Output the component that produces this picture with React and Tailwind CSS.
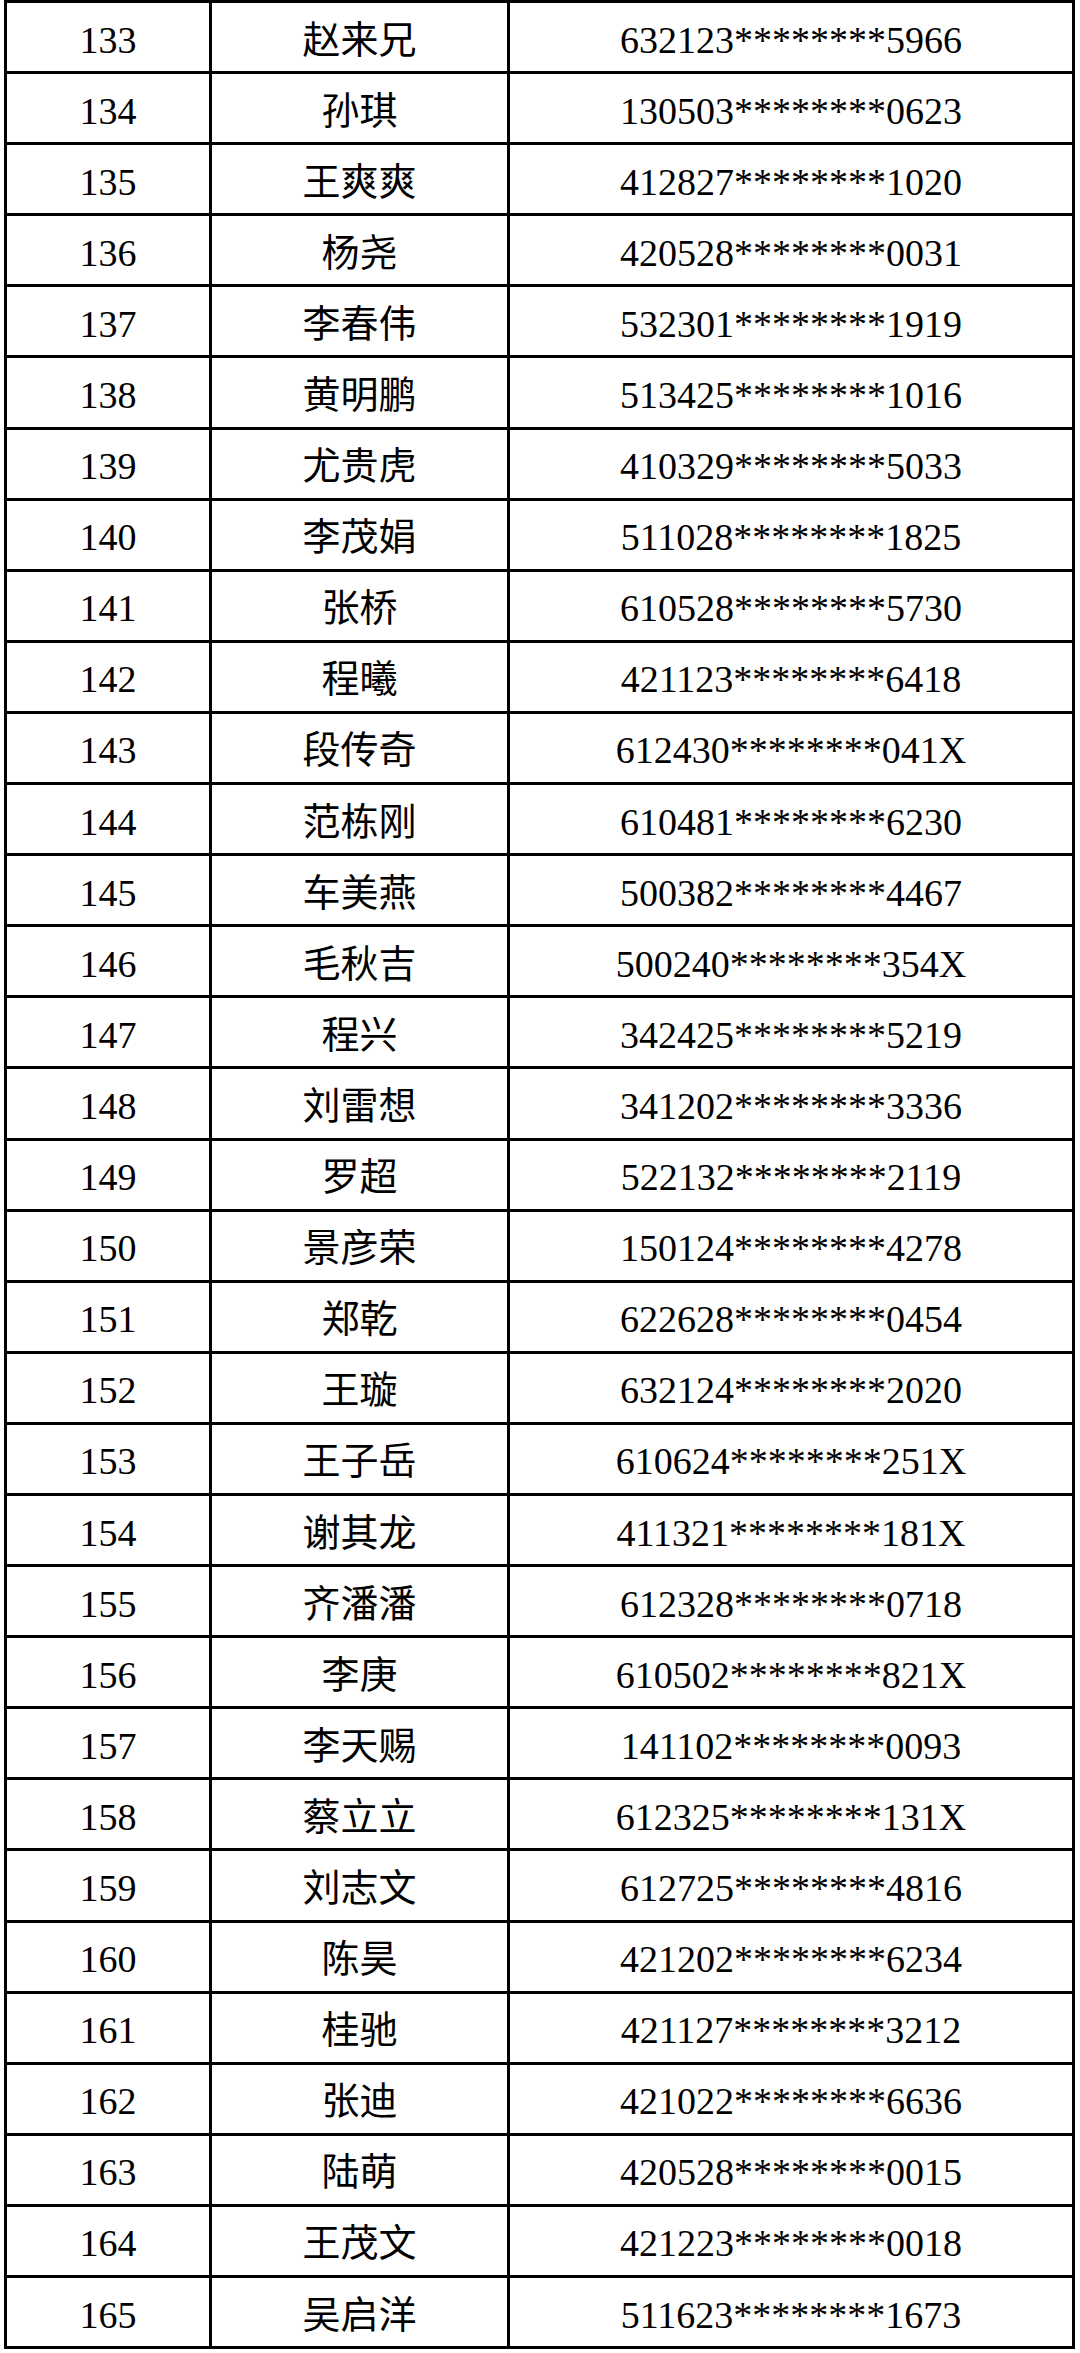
import React from "react";

const rows = [
  ["133", "赵来兄", "632123********5966"],
  ["134", "孙琪", "130503********0623"],
  ["135", "王爽爽", "412827********1020"],
  ["136", "杨尧", "420528********0031"],
  ["137", "李春伟", "532301********1919"],
  ["138", "黄明鹏", "513425********1016"],
  ["139", "尤贵虎", "410329********5033"],
  ["140", "李茂娟", "511028********1825"],
  ["141", "张桥", "610528********5730"],
  ["142", "程曦", "421123********6418"],
  ["143", "段传奇", "612430********041X"],
  ["144", "范栋刚", "610481********6230"],
  ["145", "车美燕", "500382********4467"],
  ["146", "毛秋吉", "500240********354X"],
  ["147", "程兴", "342425********5219"],
  ["148", "刘雷想", "341202********3336"],
  ["149", "罗超", "522132********2119"],
  ["150", "景彦荣", "150124********4278"],
  ["151", "郑乾", "622628********0454"],
  ["152", "王璇", "632124********2020"],
  ["153", "王子岳", "610624********251X"],
  ["154", "谢其龙", "411321********181X"],
  ["155", "齐潘潘", "612328********0718"],
  ["156", "李庚", "610502********821X"],
  ["157", "李天赐", "141102********0093"],
  ["158", "蔡立立", "612325********131X"],
  ["159", "刘志文", "612725********4816"],
  ["160", "陈昊", "421202********6234"],
  ["161", "桂驰", "421127********3212"],
  ["162", "张迪", "421022********6636"],
  ["163", "陆萌", "420528********0015"],
  ["164", "王茂文", "421223********0018"],
  ["165", "吴启洋", "511623********1673"],
];

const App = () => {
  return (
    <div className="w-[1080px] h-[2353px] bg-white overflow-hidden">
      <div
        className="ml-[4px] w-[1071px] border-t-[3px] border-l-[3px] border-r-[3px] border-black text-black text-[38px] leading-none"
        style={{ fontFamily: '"Liberation Serif", "Noto Sans CJK SC", serif' }}
      >
        {rows.map((r) => (
          <div key={r[0]} className="flex h-[71.1px] border-b-[3px] border-black">
            <div className="w-[202px] flex items-center justify-center pt-[5px] border-r-[3px] border-black box-content">
              {r[0]}
            </div>
            <div className="w-[295px] flex items-center justify-center pt-[5px] border-r-[3px] border-black box-content">
              {r[1]}
            </div>
            <div className="flex-1 flex items-center justify-center pt-[5px]">
              {r[2]}
            </div>
          </div>
        ))}
      </div>
    </div>
  );
};

export default App;
